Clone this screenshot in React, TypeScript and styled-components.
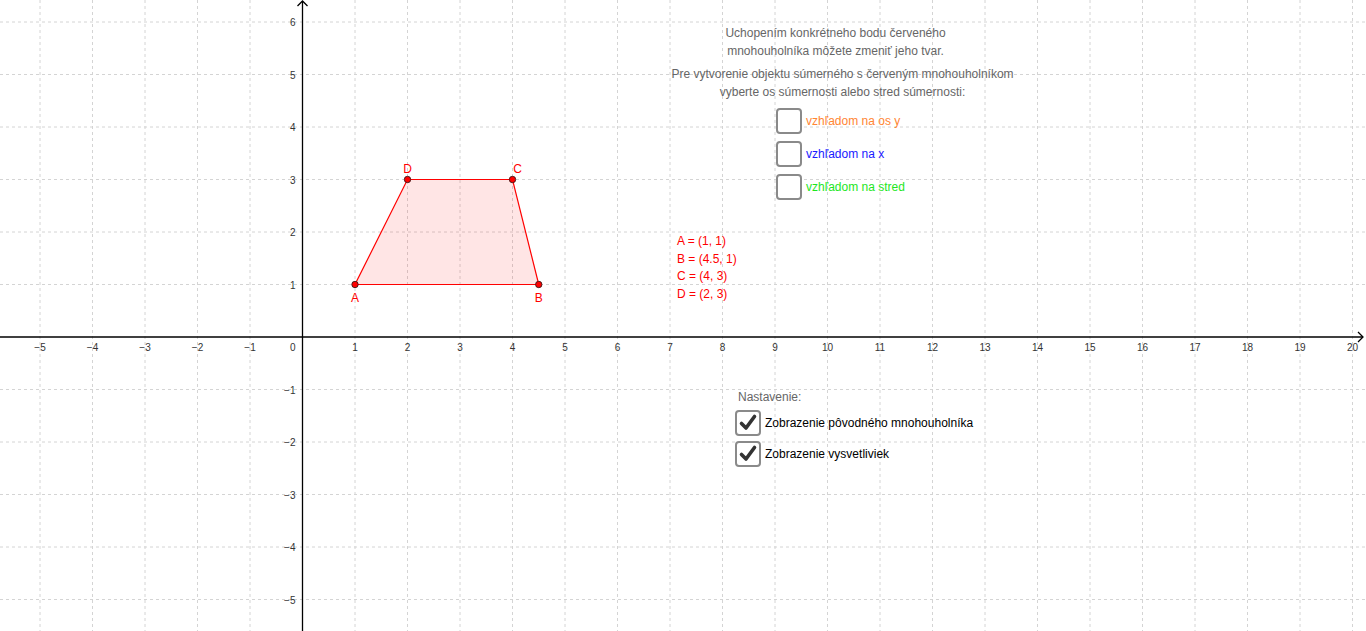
import React from "react";
import styled, { createGlobalStyle } from "styled-components";

const X0 = 302.5;
const Y0 = 337;
const U = 52.5;
const W = 1366;
const H = 631;

const px = (x: number) => X0 + x * U;
const py = (y: number) => Y0 - y * U;

const GlobalStyle = createGlobalStyle`
  html, body {
    margin: 0;
    padding: 0;
    background: #ffffff;
    overflow: hidden;
  }
  body {
    font-family: "Liberation Sans", Arial, sans-serif;
  }
`;

const Canvas = styled.div`
  position: relative;
  width: ${W}px;
  height: ${H}px;
  overflow: hidden;
  background: #ffffff;
`;

const Graph = styled.svg`
  position: absolute;
  left: 0;
  top: 0;
`;

const Panel = styled.div<{ $x: number; $y: number; $w?: number }>`
  position: absolute;
  left: ${(p) => p.$x}px;
  top: ${(p) => p.$y}px;
  ${(p) => (p.$w ? `width: ${p.$w}px;` : "")}
  display: flex;
  flex-direction: column;
  font-family: "Liberation Sans", Arial, sans-serif;
  font-size: 12px;
`;

const HintText = styled.div`
  color: #666666;
  text-align: center;
  line-height: 18px;
  white-space: nowrap;
`;

const HintBlock = styled.div<{ $shift?: number }>`
  display: flex;
  flex-direction: column;
  margin-left: ${(p) => (p.$shift ?? 0) * 2}px;
  & + & {
    margin-top: 5px;
  }
`;

const CheckList = styled.div<{ $gap: number }>`
  display: flex;
  flex-direction: column;
  gap: ${(p) => p.$gap}px;
`;

const CheckRow = styled.label`
  display: flex;
  align-items: center;
  gap: 4px;
  height: 26px;
`;

const Box = styled.span`
  box-sizing: border-box;
  width: 26px;
  height: 26px;
  border: 2px solid #8a8a8a;
  border-radius: 4px;
  background: #ffffff;
  display: flex;
  align-items: center;
  justify-content: center;
  flex-shrink: 0;
`;

const CheckLabel = styled.span<{ $color: string }>`
  color: ${(p) => p.$color};
  font-size: 12px;
  white-space: nowrap;
`;

const CoordText = styled.div`
  color: #ff0000;
  font-size: 12px;
  line-height: 17.7px;
  white-space: nowrap;
`;

const SettingsTitle = styled.div`
  color: #666666;
  font-size: 12px;
  margin: 0 0 6px 3px;
`;

const Tick = ({ checked }: { checked: boolean }) => (
  <Box>
    {checked && (
      <svg width="20" height="20" viewBox="0 0 20 20">
        <path
          d="M3.5 10.5 L8 15 L16.5 3.5"
          fill="none"
          stroke="#333333"
          strokeWidth="3.6"
          strokeLinecap="round"
          strokeLinejoin="round"
        />
      </svg>
    )}
  </Box>
);

const fmt = (n: number) => (n < 0 ? `\u2212${-n}` : `${n}`);

const points = [
  { name: "A", x: 1, y: 1, lx: 0, ly: 17 },
  { name: "B", x: 4.5, y: 1, lx: 0, ly: 17 },
  { name: "C", x: 4, y: 3, lx: 5, ly: -7 },
  { name: "D", x: 2, y: 3, lx: 0, ly: -7 },
];

const GridAndAxes = () => {
  const xs: number[] = [];
  for (let i = -5; i <= 20; i++) xs.push(i);
  const ys: number[] = [];
  for (let i = -5; i <= 6; i++) ys.push(i);
  const poly = points.map((p) => `${px(p.x)},${py(p.y)}`).join(" ");
  return (
    <Graph width={W} height={H} viewBox={`0 0 ${W} ${H}`}>
      <g stroke="#d4d4d4" strokeWidth="1" strokeDasharray="3 3">
        {xs
          .filter((i) => i !== 0)
          .map((i) => (
            <line key={`vx${i}`} x1={px(i)} y1={0} x2={px(i)} y2={H} />
          ))}
        {ys
          .filter((i) => i !== 0)
          .map((i) => (
            <line key={`hy${i}`} x1={0} y1={py(i)} x2={W} y2={py(i)} />
          ))}
      </g>

      <g stroke="#000" strokeWidth="1.3" fill="none">
        <line x1={0} y1={Y0} x2={W - 3} y2={Y0} />
        <line x1={X0} y1={H} x2={X0} y2={1} />
        <path d={`M${W - 8} ${Y0 - 5} L${W - 3} ${Y0} L${W - 8} ${Y0 + 5}`} />
        <path d={`M${X0 - 5} 6 L${X0} 1 L${X0 + 5} 6`} />
      </g>

      <g
        fill="#333"
        fontSize="10"
        fontFamily="'Liberation Sans', Arial, sans-serif"
      >
        {xs
          .filter((i) => i !== 0)
          .map((i) => (
            <text key={`lx${i}`} x={px(i)} y={Y0 + 14} textAnchor="middle">
              {fmt(i)}
            </text>
          ))}
        <text x={X0 - 7} y={Y0 + 14} textAnchor="end">
          0
        </text>
        {ys
          .filter((i) => i !== 0)
          .map((i) => (
            <text key={`ly${i}`} x={X0 - 7} y={py(i) + 4} textAnchor="end">
              {fmt(i)}
            </text>
          ))}
      </g>

      <polygon
        points={poly}
        fill="rgba(255,0,0,0.1)"
        stroke="#ff0000"
        strokeWidth="1.2"
      />
      {points.map((p) => (
        <g key={p.name}>
          <circle
            cx={px(p.x)}
            cy={py(p.y)}
            r="3.2"
            fill="#ff0000"
            stroke="#3a1a1a"
            strokeWidth="0.9"
          />
          <text
            x={px(p.x) + p.lx}
            y={py(p.y) + p.ly}
            fill="#ff0000"
            fontSize="12"
            textAnchor="middle"
            fontFamily="'Liberation Sans', Arial, sans-serif"
          >
            {p.name}
          </text>
        </g>
      ))}
    </Graph>
  );
};

export default function App() {
  return (
    <>
      <GlobalStyle />
      <Canvas>
        <GridAndAxes />

        <Panel $x={650} $y={24} $w={371}>
          <HintBlock>
            <HintText>Uchopením konkrétneho bodu červeného</HintText>
            <HintText>mnohouholníka môžete zmeniť jeho tvar.</HintText>
          </HintBlock>
          <HintBlock $shift={7}>
            <HintText>
              Pre vytvorenie objektu súmerného s červeným mnohouholníkom
            </HintText>
            <HintText>vyberte os súmernosti alebo stred súmernosti:</HintText>
          </HintBlock>
        </Panel>

        <Panel $x={776} $y={108}>
          <CheckList $gap={7}>
            <CheckRow>
              <Tick checked={false} />
              <CheckLabel $color="#ff8533">vzhľadom na os y</CheckLabel>
            </CheckRow>
            <CheckRow>
              <Tick checked={false} />
              <CheckLabel $color="#1a1aff">vzhľadom na x</CheckLabel>
            </CheckRow>
            <CheckRow>
              <Tick checked={false} />
              <CheckLabel $color="#1ee61e">vzhľadom na stred</CheckLabel>
            </CheckRow>
          </CheckList>
        </Panel>

        <Panel $x={677} $y={233}>
          <CoordText>A = (1, 1)</CoordText>
          <CoordText>B = (4.5, 1)</CoordText>
          <CoordText>C = (4, 3)</CoordText>
          <CoordText>D = (2, 3)</CoordText>
        </Panel>

        <Panel $x={735} $y={390}>
          <SettingsTitle>Nastavenie:</SettingsTitle>
          <CheckList $gap={5}>
            <CheckRow>
              <Tick checked />
              <CheckLabel $color="#000000">
                Zobrazenie pôvodného mnohouholníka
              </CheckLabel>
            </CheckRow>
            <CheckRow>
              <Tick checked />
              <CheckLabel $color="#000000">Zobrazenie vysvetliviek</CheckLabel>
            </CheckRow>
          </CheckList>
        </Panel>
      </Canvas>
    </>
  );
}
